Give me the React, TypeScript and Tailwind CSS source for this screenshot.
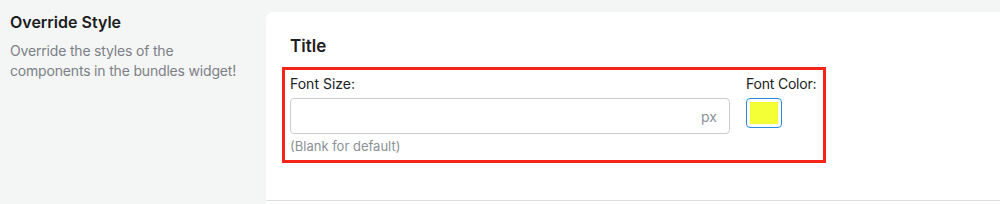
import React from "react";

export default function App() {
  return (
    <div
      className="flex w-[1000px] h-[204px] overflow-hidden bg-[#f4f6f6] text-[#202223]"
      style={{ fontFamily: "Inter, 'Noto Sans', sans-serif" }}
    >
      <div className="w-[266px] shrink-0 pl-[10px] pt-[10px]">
        <h2 className="text-[16px] leading-[24px] font-semibold text-[#1a1c1d]">Override Style</h2>
        <p className="mt-[7px] text-[14px] leading-[20px] tracking-[-0.18px] text-[#7c8085]">
          Override the styles of the
          <br />
          components in the bundles widget!
        </p>
      </div>
      <div className="flex-1 flex flex-col pt-[12px]">
        <div className="h-[189px] bg-white rounded-tl-lg border-b border-[#dcdfe2] px-[16px] pt-[22px]">
          <h3 className="pl-[8px] text-[17px] leading-[24px] font-semibold text-[#1f2021]">Title</h3>
          <div className="mt-[9px] w-[544px] h-[96px] border-[3px] border-[#f4261b] pl-[5px] pr-[4px] pt-[4px] flex gap-[16px]">
            <div className="w-[440px] shrink-0 flex flex-col">
              <label className="text-[14px] leading-[20px] text-[#202223]">Font Size:</label>
              <div className="mt-[4px] h-[36px] rounded-[4px] border border-[#c9cccf] flex items-center justify-end pr-[12px]">
                <span className="text-[14px] text-[#8c9196]">px</span>
              </div>
              <div className="mt-[4px] text-[13px] leading-[16px] text-[#8c9196]">(Blank for default)</div>
            </div>
            <div className="shrink-0 flex flex-col">
              <label className="whitespace-nowrap text-[14px] leading-[20px] tracking-[-0.2px] text-[#202223]">Font Color:</label>
              <div className="mt-[4px] w-[36px] h-[30px] rounded-[4px] border border-[#2a8be0] p-[3px] flex">
                <div className="flex-1 bg-[#f4ff35]" />
              </div>
            </div>
          </div>
        </div>
        <div className="flex-1 bg-white" />
      </div>
    </div>
  );
}
